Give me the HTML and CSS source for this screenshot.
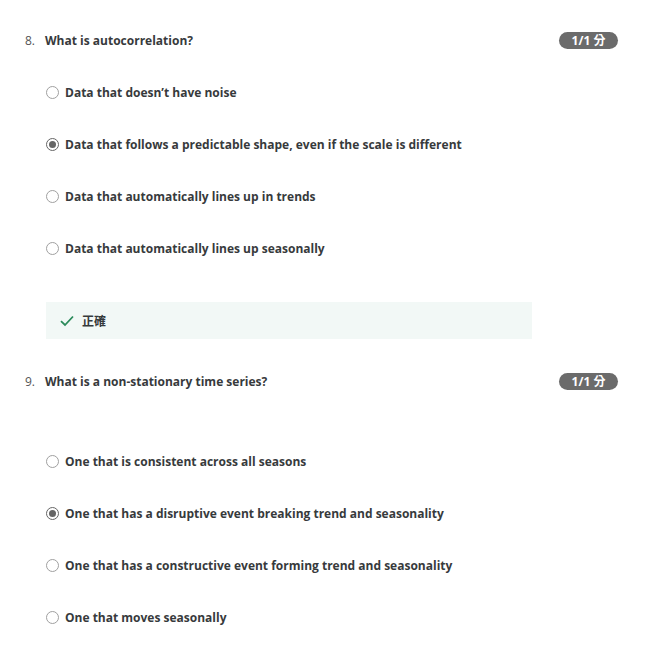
FILE: index.html
```html
<!DOCTYPE html>
<html>
<head>
<meta charset="utf-8">
<link rel="stylesheet" href="styles.css">
</head>
<body>
<div class="page">
  <section class="question q8">
    <div class="q-head">
      <span class="q-num">8.</span>
      <span class="q-text">What is autocorrelation?</span>
      <span class="badge">1/1 分</span>
    </div>
    <ul class="options">
      <li class="option"><span class="radio"></span><span class="opt-text">Data that doesn’t have noise</span></li>
      <li class="option"><span class="radio checked"></span><span class="opt-text">Data that follows a predictable shape, even if the scale is different</span></li>
      <li class="option"><span class="radio"></span><span class="opt-text">Data that automatically lines up in trends</span></li>
      <li class="option"><span class="radio"></span><span class="opt-text">Data that automatically lines up seasonally</span></li>
    </ul>
    <div class="feedback">
      <svg class="check" width="14" height="12" viewBox="0 0 14 12"><path d="M1 6.2 L5 10 L13 1.5" fill="none" stroke="#2a8a5a" stroke-width="1.8"/></svg>
      <span class="fb-text">正確</span>
    </div>
  </section>
  <section class="question q9">
    <div class="q-head">
      <span class="q-num">9.</span>
      <span class="q-text">What is a non-stationary time series?</span>
      <span class="badge">1/1 分</span>
    </div>
    <ul class="options">
      <li class="option"><span class="radio"></span><span class="opt-text">One that is consistent across all seasons</span></li>
      <li class="option"><span class="radio checked"></span><span class="opt-text">One that has a disruptive event breaking trend and seasonality</span></li>
      <li class="option"><span class="radio"></span><span class="opt-text">One that has a constructive event forming trend and seasonality</span></li>
      <li class="option"><span class="radio"></span><span class="opt-text">One that moves seasonally</span></li>
    </ul>
  </section>
</div>
</body>
</html>
```

FILE: styles.css
```css
html, body {
  margin: 0;
  padding: 0;
  background: #ffffff;
}
body {
  font-family: "Open Sans", "Noto Sans CJK TC", sans-serif;
  color: #373a3c;
  font-size: 12px;
}
.page {
  padding: 30px 38px 0 25px;
  width: 593px;
}
.q-head {
  display: flex;
  align-items: center;
  height: 20px;
}
.q-num {
  width: 20px;
  font-weight: 400;
  color: #555;
}
.q-text {
  font-weight: 700;
  flex: 1;
}
.badge {
  background: #6b6b6b;
  color: #fff;
  font-weight: 700;
  font-size: 12px;
  border-radius: 9px;
  height: 17px;
  line-height: 17px;
  width: 59px;
  text-align: center;
}
.options {
  list-style: none;
  margin: 16px 0 0 0;
  padding: 0 0 0 21px;
}
.option {
  display: flex;
  align-items: center;
  height: 52px;
}
.radio {
  box-sizing: border-box;
  width: 13px;
  height: 13px;
  border: 1px solid #a0a0a0;
  border-radius: 50%;
  margin-right: 6px;
  position: relative;
  flex: none;
}
.radio.checked {
  border-color: #666;
}
.radio.checked::after {
  content: "";
  position: absolute;
  left: 2px;
  top: 2px;
  width: 7px;
  height: 7px;
  border-radius: 50%;
  background: #666;
}
.opt-text {
  font-weight: 700;
}
.feedback {
  margin: 28px 0 0 21px;
  width: 486px;
  height: 37px;
  background: #f2f8f6;
  display: flex;
  align-items: center;
  padding-left: 14px;
  box-sizing: border-box;
}
.check {
  margin-right: 8px;
}
.fb-text {
  font-weight: 700;
  font-size: 12px;
}
.q9 {
  margin-top: 32px;
}
.q9 .options {
  margin-top: 44px;
}
```
